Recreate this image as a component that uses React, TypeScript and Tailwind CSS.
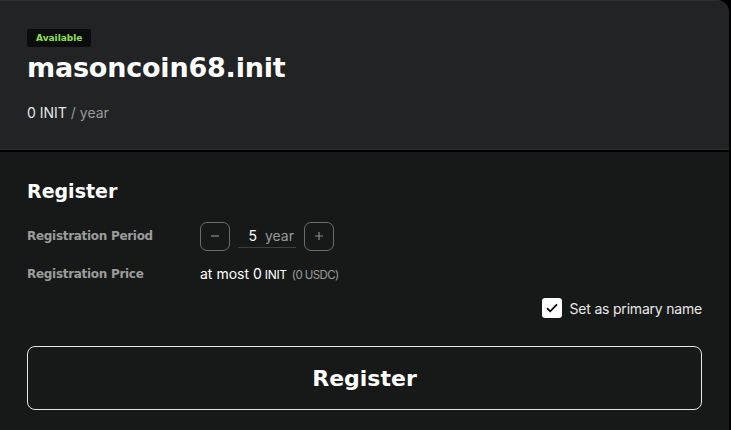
import React from "react";

const wide = { fontFamily: '"DejaVu Sans", sans-serif' };
const inter = { fontFamily: 'Inter, "Noto Sans", sans-serif' };

export default function App() {
  return (
    <div className="w-[731px] h-[430px] bg-black overflow-hidden">
      <div className="w-[729px] h-full flex flex-col rounded-tr-[12px] overflow-hidden">
        <div className="h-[149px] bg-[#222325] border-t border-[#2e3032] pl-[27px] pt-[28px] flex flex-col">
          <div className="self-start bg-[#0b0c0b] rounded-[2px] px-[9px] h-[18px] flex items-center">
            <span style={wide} className="text-[9px] font-bold text-[#8ee04c] leading-none">Available</span>
          </div>
          <div style={wide} className="mt-[4px] text-[27px] font-bold text-white leading-[34px] tracking-[-0.2px]">
            masoncoin68.init
          </div>
          <div style={inter} className="mt-[19px] text-[14px] leading-[18px]">
            <span className="text-[#e6e6e6]">0 INIT</span>
            <span className="text-[#9a9a9a]"> / year</span>
          </div>
        </div>
        <div className="h-[1px] bg-[#2f3133]" />
        <div className="h-[2px] bg-black" />
        <div className="flex-1 bg-[#171918] px-[27px] pt-[27px] flex flex-col">
          <div style={wide} className="text-[19px] font-bold text-white leading-[24px]">Register</div>
          <div className="mt-[18px] flex items-center h-[30px]">
            <div style={wide} className="w-[173px] text-[12px] font-bold text-[#9c9c9c] tracking-[-0.3px]">Registration Period</div>
            <div className="flex items-center">
              <button className="w-[30px] h-[29px] rounded-[7px] border border-[#6c6c6c] flex items-center justify-center text-[#8a8a8a]">
                <svg width="10" height="10" viewBox="0 0 10 10"><path d="M1 5h8" stroke="currentColor" strokeWidth="1.2" /></svg>
              </button>
              <div style={inter} className="mx-[8px] w-[58px] h-[24px] border-b border-[#3c3e3f] flex items-center justify-end pr-[2px] gap-[8px] text-[14px]">
                <span className="text-white">5</span>
                <span className="text-[#9a9a9a]">year</span>
              </div>
              <button className="w-[30px] h-[29px] rounded-[7px] border border-[#6c6c6c] flex items-center justify-center text-[#8a8a8a]">
                <svg width="10" height="10" viewBox="0 0 10 10"><path d="M1 5h8M5 1v8" stroke="currentColor" strokeWidth="1.2" /></svg>
              </button>
            </div>
          </div>
          <div className="mt-[13px] flex items-center h-[20px]">
            <div style={wide} className="w-[173px] text-[12px] font-bold text-[#9c9c9c] tracking-[-0.3px]">Registration Price</div>
            <div style={inter} className="flex items-baseline text-white">
              <span className="text-[14px]">at most 0</span>
              <span className="text-[12px] ml-[3px] tracking-[-0.3px]">INIT</span>
              <span className="text-[11.5px] ml-[5px] text-[#9a9a9a] tracking-[-0.6px]">(0 USDC)</span>
            </div>
          </div>
          <div className="mt-[13px] flex items-center justify-end h-[22px]">
            <div className="w-[20px] h-[20px] bg-white rounded-[3px] flex items-center justify-center">
              <svg width="16" height="16" viewBox="0 0 16 16"><path d="M3 8.2l3.2 3.2 6.8-7" fill="none" stroke="#000" strokeWidth="1.7" /></svg>
            </div>
            <span style={inter} className="ml-[8px] text-[14px] text-[#e8e8e8] tracking-[-0.2px]">Set as primary name</span>
          </div>
          <button className="mt-[27px] h-[64px] w-full rounded-[8px] border-[1.5px] border-[#e6e6e6] flex items-center justify-center">
            <span style={wide} className="text-[22px] font-bold text-white">Register</span>
          </button>
        </div>
      </div>
    </div>
  );
}
